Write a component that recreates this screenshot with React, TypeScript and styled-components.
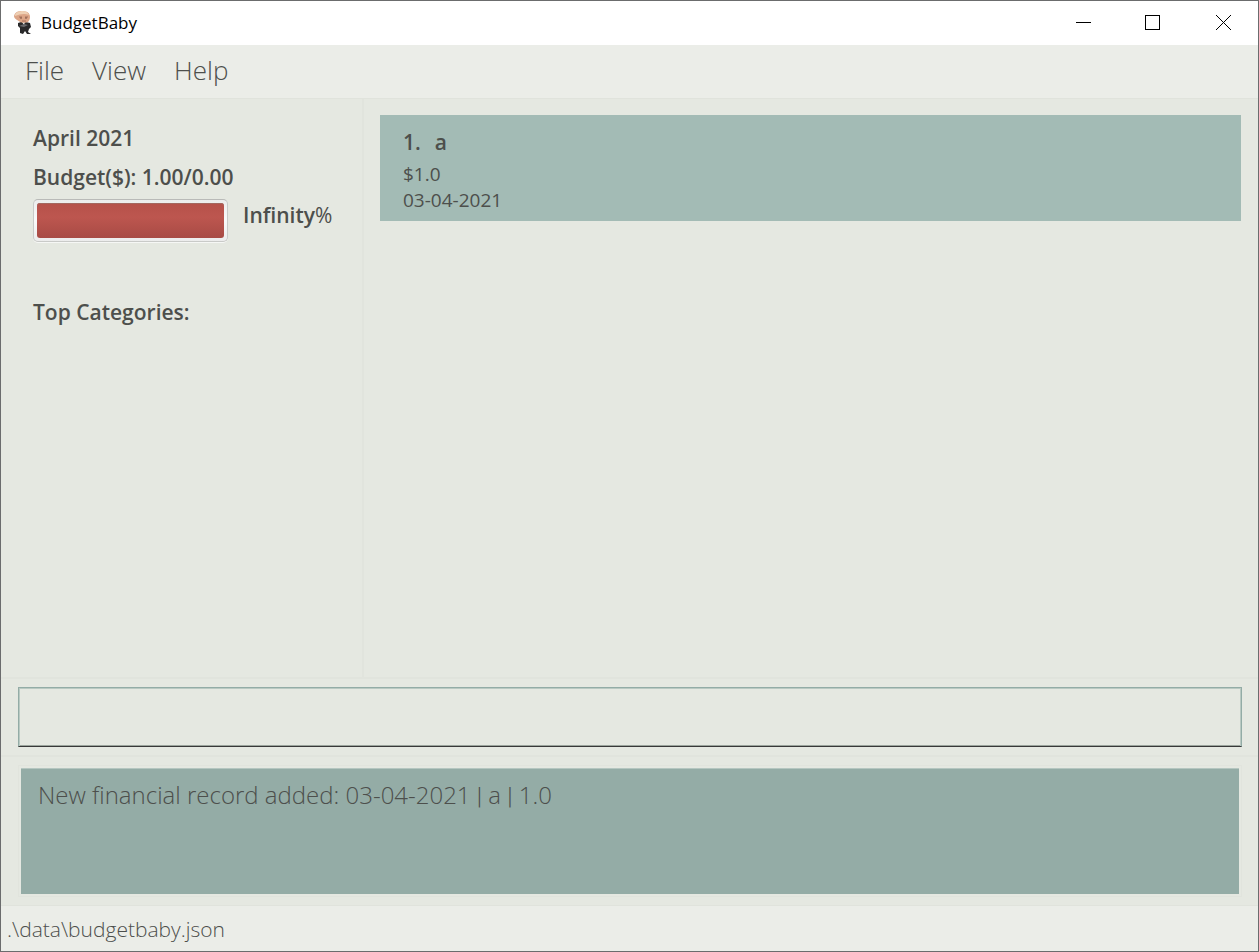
import React from "react";
import styled, { createGlobalStyle } from "styled-components";

const GlobalStyle = createGlobalStyle`
  *, *::before, *::after { box-sizing: border-box; }
  body {
    margin: 0;
    background: #e5e8e1;
    color: #4d4f4c;
    font-family: "Open Sans", "Noto Sans", sans-serif;
  }
`;

const Window = styled.div`
  display: flex;
  flex-direction: column;
  min-height: 100vh;
  border: 1px solid #6b6c6d;
  background: #e5e8e1;
`;

const TitleBar = styled.header`
  display: flex;
  align-items: center;
  height: 44px;
  padding-left: 12px;
  background: #fff;
  color: #000;
`;

const AppTitle = styled.h1`
  flex: 1;
  margin: 0 0 0 8px;
  font-size: 17px;
  line-height: 24px;
  font-weight: 400;
`;

const WindowButton = styled.button`
  display: grid;
  place-items: center;
  width: 70px;
  height: 44px;
  padding: 0;
  border: 0;
  background: transparent;
  color: #000;
`;

const MenuBar = styled.nav`
  display: flex;
  gap: 28px;
  height: 54px;
  padding: 0 24px;
  border-bottom: 1px solid #e0e3dc;
  background: #ebede8;
`;

const MenuButton = styled.button`
  height: 50px;
  padding: 0;
  border: 0;
  background: transparent;
  color: #4d4f4c;
  font: 300 26px/50px "Open Sans", "Noto Sans", sans-serif;
`;

const Content = styled.main`
  display: flex;
  flex: 1;
  min-height: 0;
  border-bottom: 2px solid #e1e4dd;
`;

const Sidebar = styled.aside`
  flex: none;
  width: 363px;
  padding: 20px 24px 0 32px;
  border-right: 2px solid #e1e4dd;
`;

const SideLine = styled.h2`
  margin: 0;
  font-size: 21px;
  line-height: 39px;
  font-weight: 600;
`;

const BudgetUsage = styled.div`
  display: flex;
  gap: 15px;
  height: 96px;
  padding-top: 2px;
`;

const UsageBar = styled.progress`
  appearance: none;
  width: 195px;
  height: 43px;
  padding: 3px;
  border: 1px solid #c9cac8;
  border-top-color: #b9bab8;
  border-radius: 5px;
  background: linear-gradient(#ececec, #fafafa 50%, #ececec);
  box-shadow: 0 1px 0 #f6f7f5;

  &::-webkit-progress-bar { background: transparent; }
  &::-webkit-progress-value {
    border-radius: 3px;
    background: linear-gradient(#b5514a, #bd564f 40%, #a84b45);
    box-shadow: inset 0 1px 0 #a3675f;
  }
`;

const UsageText = styled.label`
  font-size: 21px;
  line-height: 33px;
  font-weight: 600;
`;

const Percent = styled.span`
  font-weight: 400;
`;

const Records = styled.ol`
  flex: 1;
  min-width: 0;
  margin: 0;
  padding: 16px 17px 16px 16px;
  list-style: none;
`;

const RecordCard = styled.li`
  padding: 11px 23px 8px;
  background: #a3bbb5;
`;

const RecordTitle = styled.h3`
  display: flex;
  gap: 14px;
  margin: 0 0 3px;
  font-size: 21px;
  line-height: 32px;
  font-weight: 600;
`;

const RecordText = styled.p`
  margin: 0;
  font-size: 19px;
  line-height: 26px;
`;

const CommandArea = styled.form`
  display: flex;
  padding: 8px 16px 8px 17px;
  border-bottom: 2px solid #e1e4dd;
`;

const CommandInput = styled.input`
  flex: 1;
  min-width: 0;
  height: 60px;
  padding: 0 16px;
  border: 1px solid #93aca6;
  border-bottom-color: #383838;
  border-radius: 0;
  outline: 0;
  background: transparent;
  box-shadow: inset 0 1px 0 #b9c9c2, inset 1px 0 0 #b9c9c2, inset -1px 0 0 #b9c9c2, inset 0 -1px 0 #9ba49c;
  color: #4d4f4c;
  font: 300 24px/32px "Open Sans", "Noto Sans", sans-serif;
`;

const ResultArea = styled.section`
  padding: 8px 16px 8px 17px;
  border-bottom: 1px solid #e0e3dc;
`;

const ResultFrame = styled.div`
  padding: 2px;
  border: 1px solid #e1e4dd;
`;

const ResultBox = styled.output`
  display: block;
  min-height: 126px;
  padding: 9px 17px;
  border-top: 1px solid #b5c6c0;
  background: #94aca6;
  font-size: 24px;
  line-height: 34px;
  font-weight: 300;
`;

const Separator = styled.span`
  font-family: Roboto, sans-serif;
`;

const StatusBar = styled.footer`
  height: 45px;
  padding: 0 6px;
  background: #ebede8;
  font-size: 21px;
  line-height: 47px;
  font-weight: 300;
`;

function BabyLogo() {
  return (
    <svg width="20" height="24" viewBox="0 0 20 24" aria-hidden="true">
      <path d="M5 12l3-1 5 0 4 1 1 4-2 2-1 3 3 2h-4l-2-3-2 3-3-1 0-5-2-2z" fill="#29292b" />
      <path d="M9 11h3l-1 3z" fill="#e8e8e8" />
      <path d="M6 15l5-2 4 1-4 2z" fill="#68686c" />
      <path d="M1 5C2 1 5 0 9 0c5 0 8 2 8 6 0 2-1 4-2 5-2 1-6 1-8 0C5 9 1 8 1 5z" fill="#dca587" />
      <path d="M2 4c1-3 4-4 8-4 3 0 5 2 6 4-4-2-9-1-14 1z" fill="#efd0b4" />
      <path d="M6 6l3 0M12 6l3 0M9 10l4 0" stroke="#a8705a" fill="none" />
      <path d="M7 7h2M12 7h2" stroke="#7d5547" fill="none" />
    </svg>
  );
}

export default function App() {
  return (
    <>
      <GlobalStyle />
      <Window>
        <TitleBar>
          <BabyLogo />
          <AppTitle>BudgetBaby</AppTitle>
          <WindowButton type="button" aria-label="Minimize">
            <svg width="16" height="16" shapeRendering="crispEdges"><path d="M1 7.5h15" stroke="currentColor" /></svg>
          </WindowButton>
          <WindowButton type="button" aria-label="Maximize">
            <svg width="16" height="16" shapeRendering="crispEdges"><path d="M.5 .5h14v14H.5z" fill="none" stroke="currentColor" /></svg>
          </WindowButton>
          <WindowButton type="button" aria-label="Close">
            <svg width="16" height="16"><path d="M1 0l15 15M16 0l-15 15" stroke="currentColor" /></svg>
          </WindowButton>
        </TitleBar>
        <MenuBar>
          <MenuButton type="button">File</MenuButton>
          <MenuButton type="button">View</MenuButton>
          <MenuButton type="button">Help</MenuButton>
        </MenuBar>
        <Content>
          <Sidebar>
            <SideLine>April 2021</SideLine>
            <SideLine>Budget($): 1.00/0.00</SideLine>
            <BudgetUsage>
              <UsageBar id="usage" value={1} max={1} />
              <UsageText htmlFor="usage">Infinity<Percent>%</Percent></UsageText>
            </BudgetUsage>
            <SideLine>Top Categories:</SideLine>
          </Sidebar>
          <Records>
            <RecordCard>
              <RecordTitle><span>1.</span><span>a</span></RecordTitle>
              <RecordText>$1.0</RecordText>
              <RecordText>03-04-2021</RecordText>
            </RecordCard>
          </Records>
        </Content>
        <CommandArea onSubmit={(e) => e.preventDefault()}>
          <CommandInput type="text" aria-label="Command" />
        </CommandArea>
        <ResultArea>
          <ResultFrame>
            <ResultBox>
              New financial record added: 03-04-2021 <Separator>|</Separator> a <Separator>|</Separator> 1.0
            </ResultBox>
          </ResultFrame>
        </ResultArea>
        <StatusBar>.\data\budgetbaby.json</StatusBar>
      </Window>
    </>
  );
}
